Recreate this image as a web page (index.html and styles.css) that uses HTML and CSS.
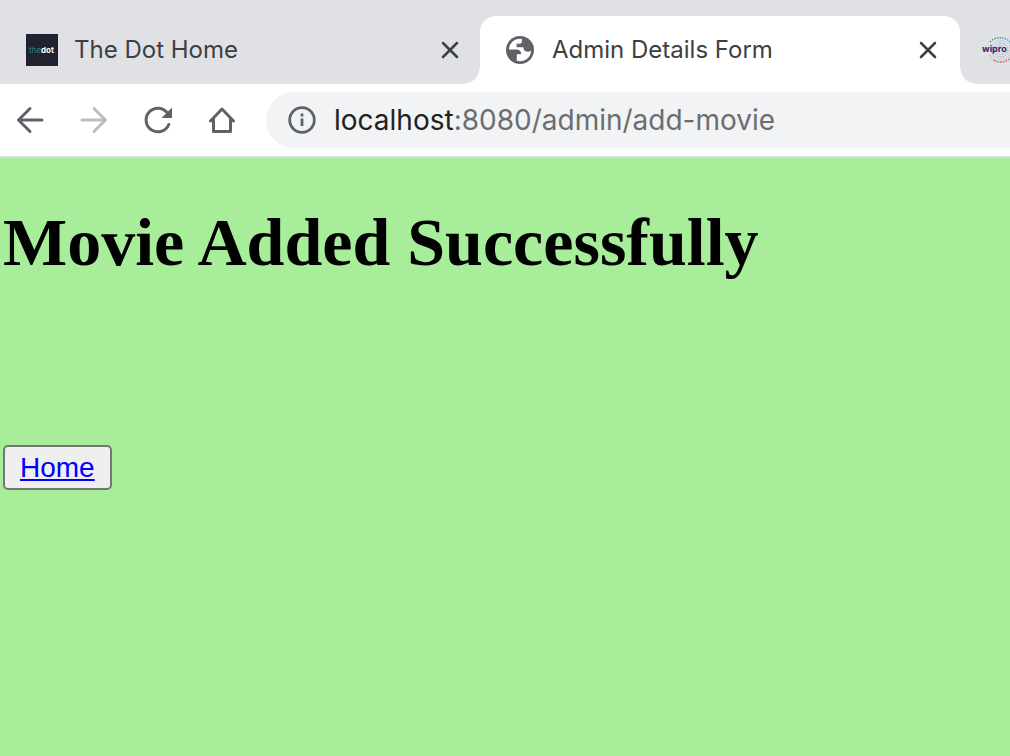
FILE: index.html
```html
<!DOCTYPE html>
<html lang="en">
<head>
<meta charset="utf-8">
<title>Admin Details Form</title>
<link rel="stylesheet" href="styles.css">
</head>
<body>
<header class="browser">
  <div class="tabs">
    <div class="tab">
      <svg class="favicon" viewBox="0 0 32 32" aria-hidden="true"><rect width="32" height="32" fill="#20232f"/><text class="dot-logo" x="3" y="19"><tspan fill="#2f8577">the</tspan><tspan fill="#fff" font-weight="700">dot</tspan><tspan fill="#2f8577">.</tspan></text></svg>
      <span class="tab-title">The Dot Home</span>
      <button class="close" aria-label="Close The Dot Home"><svg viewBox="0 0 20 20"><path d="M3 3l14 14M17 3L3 17"/></svg></button>
    </div>
    <div class="tab active">
      <svg class="favicon" viewBox="0 0 32 32" aria-hidden="true"><circle cx="16" cy="16" r="14" fill="#5f6368"/><path fill="#fff" d="M18 5C11 4 5.200 9 5 15.500h7.500c3 0 4.700 1.700 4.700 4.700h-4.400v6.500c7.200 2 14-2.900 14.200-10-1.300.9-3 1.300-4.500.9-2.200-.6-3.200-2.100-3.100-4.300h-6.800V9.800h3c1.900 0 2.600-1.800 2.400-4.800z"/></svg>
      <span class="tab-title">Admin Details Form</span>
      <button class="close" aria-label="Close Admin Details Form"><svg viewBox="0 0 20 20"><path d="M3 3l14 14M17 3L3 17"/></svg></button>
    </div>
    <div class="tab next">
      <svg class="wipro" viewBox="0 0 32 32" aria-hidden="true">
        <g fill="none" stroke-width="1.500" stroke-dasharray="1.500 1.200">
          <path stroke="#35a86b" d="M8 8A12 12 0 0 1 20 4"/><path stroke="#3c9fd8" d="M20 4A12 12 0 0 1 31 14"/><path stroke="#d64292" d="M31 18A12 12 0 0 1 19 28"/><path stroke="#e4573d" d="M19 28A12 12 0 0 1 12 26"/><path stroke="#edb73b" d="M12 26A12 12 0 0 1 7 20"/>
          <circle cx="19" cy="16" r="9.500" stroke="#b3b8d8" stroke-width="1"/><circle cx="19" cy="16" r="7" stroke="#8fa5dc" stroke-width="1"/><circle cx="19" cy="16" r="4.500" stroke="#a9a2d4" stroke-width="1"/>
        </g>
        <text class="wipro-name" x="0" y="18">wipro</text>
      </svg>
    </div>
  </div>
  <nav class="toolbar" aria-label="Browser">
    <button class="tool" aria-label="Back"><svg viewBox="0 0 32 32"><path d="M28 16H5M16 4.500L4.500 16 16 27.500"/></svg></button>
    <button class="tool disabled" aria-label="Forward" disabled><svg viewBox="0 0 32 32"><path d="M4 16h23M16 4.500L27.500 16 16 27.500"/></svg></button>
    <button class="tool" aria-label="Reload"><svg viewBox="0 0 32 32"><path d="M26.800 20.500A11.800 11.800 0 1 1 25 8.500"/><path class="solid" d="M30 3.500V14H19.500z"/></svg></button>
    <button class="tool" aria-label="Home"><svg viewBox="0 0 32 32"><path d="M4.500 17L16 5l11.500 12M7.500 15v12.500h17V15"/></svg></button>
    <div class="address">
      <svg class="info" viewBox="0 0 28 28" aria-hidden="true"><circle cx="14" cy="14" r="12.300"/><path d="M14 12.500V20M14 7.500v3"/></svg>
      <span class="url"><span class="host">localhost</span>:8080/admin/add-movie</span>
    </div>
  </nav>
</header>
<main class="page">
  <h1>Movie Added Successfully</h1>
  <a class="home" href="#">Home</a>
</main>
</body>
</html>
```
FILE: styles.css
```css
* {
  box-sizing: border-box;
}

body {
  display: flex;
  flex-direction: column;
  min-height: 100vh;
  margin: 0;
  background: #a7ed9a;
}

button {
  padding: 0;
  border: 0;
  background: none;
}

svg {
  display: block;
  flex: none;
}

.browser {
  overflow: hidden;
  border-bottom: 2px solid #dadce0;
  background: #fff;
  font-family: Inter, sans-serif;
}

.tabs {
  display: flex;
  padding-top: 16px;
  background: #dfe1e5;
}

.tab {
  display: flex;
  flex: none;
  align-items: center;
  width: 480px;
  height: 68px;
  padding: 0 20px 0 26px;
}

.active {
  position: relative;
  padding-left: 24px;
  padding-right: 22px;
  border-radius: 16px 16px 0 0;
  background: #fff;
}

.active::before,
.active::after {
  content: "";
  position: absolute;
  bottom: 0;
  width: 16px;
  height: 16px;
}

.active::before {
  right: 100%;
  background: radial-gradient(circle at 0 0, transparent 15px, #fff 16px);
}

.active::after {
  left: 100%;
  background: radial-gradient(circle at 100% 0, transparent 15px, #fff 16px);
}

.next {
  padding-left: 22px;
}

.favicon,
.wipro {
  width: 32px;
  height: 32px;
}

.dot-logo {
  font-size: 8px;
}

.wipro-name {
  fill: #34245e;
  font-size: 9px;
  font-weight: 700;
}

.tab-title {
  flex: 1;
  margin-left: 16px;
  color: #3c4043;
  font-size: 24px;
  line-height: 32px;
  white-space: nowrap;
}

.close svg {
  width: 20px;
  height: 20px;
  fill: none;
  stroke: #3c4043;
  stroke-width: 2.5;
  stroke-linecap: round;
}

.toolbar {
  display: flex;
  align-items: center;
  gap: 32px;
  height: 72px;
  padding-left: 14px;
}

.tool svg {
  width: 32px;
  height: 32px;
  fill: none;
  stroke: #5f6368;
  stroke-width: 3;
  stroke-linecap: round;
  stroke-linejoin: round;
}

.disabled svg {
  stroke: #babcbe;
}

.tool .solid {
  fill: #5f6368;
  stroke: none;
}

.address {
  display: flex;
  flex: 1;
  align-items: center;
  gap: 18px;
  height: 56px;
  margin-left: -4px;
  padding-left: 22px;
  border-radius: 28px 0 0 28px;
  background: #f1f3f4;
}

.info {
  width: 28px;
  height: 28px;
  fill: none;
  stroke: #5f6368;
  stroke-width: 2.8;
}

.url {
  color: #6b6d70;
  font-size: 28px;
  line-height: 32px;
  white-space: nowrap;
}

.host {
  color: #202124;
}

.page {
  flex: 1;
  padding: 46px 3px;
}

h1 {
  margin: 0 0 164px;
  color: #000;
  font-family: "Liberation Serif", serif;
  font-size: 68px;
  font-weight: 700;
  line-height: 77px;
}

.home {
  display: inline-block;
  padding: 5px 15px 4px;
  border: 2px solid #767676;
  border-radius: 5px;
  background: #efefef;
  color: #00f;
  font-family: "Liberation Sans", sans-serif;
  font-size: 28px;
  line-height: 32px;
}
```
